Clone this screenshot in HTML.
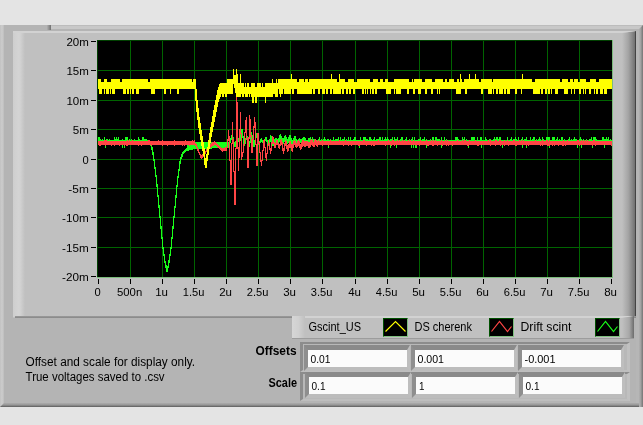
<!DOCTYPE html>
<html><head><meta charset="utf-8"><title>Scope</title>
<style>
html,body{margin:0;padding:0;}
body{width:643px;height:425px;background:#e4e4e4;position:relative;overflow:hidden;font-family:"Liberation Sans",sans-serif;font-size:12px;color:#000;}
.abs{position:absolute;}
#outer{left:0;top:25px;width:643px;height:382px;background:#b4b4b4;}
#outer .l{left:0;top:0;width:4px;height:382px;background:linear-gradient(90deg,#c0c0c0 0,#cacaca 30%,#c8c8c8 75%,#bababa 100%);}
#outer .r{right:0;top:0;width:4px;height:382px;background:linear-gradient(90deg,#b2b2b2 0,#a6a6a6 35%,#8c8c8c 70%,#747474 100%);clip-path:polygon(100% 0,100% 100%,0 100%,0 4px);z-index:2;}
#outer .b{clip-path:polygon(4px 0,100% 0,100% 100%,0 100%);left:0;bottom:0;width:643px;height:4px;background:linear-gradient(180deg,#acacac 0,#989898 45%,#808080 70%,#5a5a5a 100%);}
#strip{left:51px;top:0;width:592px;height:6px;background:linear-gradient(180deg,#bcbcbc 0,#bcbcbc 16.6%,#c8c8c8 16.7%,#c8c8c8 62%,#b4b4b4 70%,#b4b4b4 100%);}
#stripend{left:47px;top:0;width:4px;height:5px;background:linear-gradient(90deg,#b0b0b0,#707070);}
#panel{left:13px;top:31px;width:623px;height:287px;background:#c0c0c0;}
#panel .l{left:0;top:0;width:12px;height:286px;background:linear-gradient(90deg,#cecece 0,#d4d4d4 45%,#d2d2d2 60%,#c0c0c0 100%);}
#panel .r{right:0;top:0;clip-path:polygon(100% 0,100% 100%,0 100%,0 2px);width:14px;height:287px;background:linear-gradient(90deg,#c0c0c0 0,#a4a4a4 45%,#727272 92%,#444 93%,#444 100%);}
#panel .t{left:0;top:0;width:623px;height:2px;background:#d2d2d2;clip-path:polygon(0 0,100% 0,609px 100%,0 100%);}
#panel .b{left:2px;bottom:0;width:621px;height:2px;background:linear-gradient(180deg,#9c9c9c,#868686);}
#rightgap{left:636px;top:31px;width:3px;height:372px;background:#b6b6b6;}
#legend{left:292px;top:316px;width:342px;height:22px;background:#c0c0c0;box-shadow:0 1px 0 #9c9c9c;}
#legend .l{left:0;top:0;width:13px;height:22px;background:linear-gradient(90deg,#d6d6d6 0,#d0d0d0 50%,#c0c0c0 100%);}
#legend .t{left:0;top:0;width:342px;height:2px;background:#d2d2d2;clip-path:polygon(0 0,100% 0,330px 100%,0 100%);}
#legend .r{clip-path:polygon(100% 0,100% 100%,0 100%,0 2px);right:0;top:0;width:12px;height:22px;background:linear-gradient(90deg,#c0c0c0,#a8a8a8 60%,#6c6c6c 100%);}
.ico{width:23px;height:17px;background:#000;border:1px solid;border-color:#005000 #80c080 #80c080 #005000;top:318px;}
.arr{left:300px;width:330px;height:30px;background:#b8b8b8;border-style:solid;border-width:2px 3px 2px 3px;border-color:#8c8c8c #c0c0c0 #bebebe #8c8c8c;box-sizing:border-box;}
.cell{height:17px;width:99px;background:#fbfbfb;border-style:solid;border-width:5px 3px 4px 4px;border-color:#8a8a8a #bebebe #bcbcbc #8e8e8e;}
svg text{font-family:"Liberation Sans",sans-serif;font-size:12px;fill:#000;}
svg text.b{font-weight:bold;}
svg text.ax{font-size:11.6px;}
</style></head><body>
<div id="outer" class="abs"><div class="abs l"></div><div class="abs r"></div><div class="abs b"></div><div id="strip" class="abs"></div><div id="stripend" class="abs"></div></div>
<div id="rightgap" class="abs"></div>
<div id="panel" class="abs"><div class="abs l"></div><div class="abs r"></div><div class="abs t"></div><div class="abs b"></div></div>
<div id="legend" class="abs"><div class="abs t"></div><div class="abs l"></div><div class="abs r"></div></div>
<div class="abs ico" style="left:383px"></div><div class="abs ico" style="left:489px"></div><div class="abs ico" style="left:595px"></div>
<div class="abs arr" style="top:342px"></div>
<div class="abs arr" style="top:372px;height:29px"></div>
<div class="abs cell" style="left:304px;top:345px"></div><div class="abs cell" style="left:411px;top:345px"></div><div class="abs cell" style="left:518px;top:345px"></div>
<div class="abs cell" style="left:305px;top:372px"></div><div class="abs cell" style="left:412px;top:372px"></div><div class="abs cell" style="left:519px;top:372px"></div>
<svg class="abs" style="left:0;top:0;will-change:transform" width="643" height="425" viewBox="0 0 643 425">
<rect x="97" y="40" width="516" height="238" fill="#000"/>
<path d="M130.5 41V277M162.5 41V277M194.5 41V277M226.5 41V277M258.5 41V277M290.5 41V277M322.5 41V277M355.5 41V277M387.5 41V277M419.5 41V277M451.5 41V277M483.5 41V277M515.5 41V277M547.5 41V277M579.5 41V277M98 70.5H612M98 100.5H612M98 129.5H612M98 159.5H612M98 188.5H612M98 217.5H612M98 247.5H612" stroke="#006400" stroke-width="1" fill="none" shape-rendering="crispEdges"/>
<path d="M97.5 277V40.5H612" stroke="#004000" stroke-width="1" fill="none" shape-rendering="crispEdges"/>
<path d="M612.5 40V277.5H97" stroke="#7cbc7c" stroke-width="1" fill="none" shape-rendering="crispEdges"/>
<path d="M98.5 136.8V145.0M99.5 136.8V145.0M100.5 138.5V145.0M101.5 140.0V145.0M102.5 138.5V145.0M103.5 140.0V145.0M104.5 136.8V145.0M105.5 140.0V147.5M106.5 138.5V145.0M107.5 138.5V145.0M108.5 140.0V145.0M109.5 138.5V145.0M110.5 140.0V145.0M111.5 140.0V145.0M112.5 140.0V145.0M113.5 140.0V145.0M114.5 136.8V145.0M115.5 138.5V145.0M116.5 136.8V145.0M117.5 138.5V145.0M118.5 136.8V145.0M119.5 140.0V145.0M120.5 140.0V145.0M121.5 140.0V145.0M122.5 138.5V147.5M123.5 140.0V145.0M124.5 140.0V147.5M125.5 136.8V145.0M126.5 136.8V145.0M127.5 136.8V145.0M128.5 140.0V145.0M129.5 138.5V145.0M130.5 140.0V145.0M131.5 138.5V145.0M132.5 140.0V145.0M133.5 140.0V145.0M134.5 138.5V145.0M135.5 140.0V145.0M136.5 140.0V145.0M137.5 140.0V145.0M138.5 136.8V145.0M139.5 138.5V145.0M140.5 140.0V145.0M141.5 140.0V145.0M142.5 136.8V145.0M143.5 136.8V145.0M144.5 138.5V145.0M145.5 138.5V145.0M146.5 138.5V145.0M147.5 140.0V145.0M148.5 140.0V145.0M149.5 141.8V145.2M150.5 142.8V146.2M151.5 143.8V149.5M152.5 147.1V154.5M153.5 152.1V161.2M154.5 158.8V169.2M155.5 166.8V177.2M156.5 174.8V186.5M157.5 184.1V197.1M158.5 194.7V207.6M159.5 205.2V218.2M160.5 215.8V228.5M161.5 226.1V238.9M162.5 236.5V249.2M163.5 246.8V256.2M164.5 253.8V263.2M165.5 260.8V267.7M166.5 265.3V272.2M167.5 265.8V272.2M168.5 260.4V268.2M169.5 253.6V262.8M170.5 246.8V256.0M171.5 236.5V249.2M172.5 226.1V238.9M173.5 215.8V228.5M174.5 205.5V218.2M175.5 195.2V207.9M176.5 185.0V197.6M177.5 175.9V187.4M178.5 168.7V178.3M179.5 161.4V171.1M180.5 156.6V163.8M181.5 154.2V159.0M182.5 151.8V156.6M183.5 150.8V154.2M184.5 149.8V153.2M185.5 148.8V152.2M186.5 148.4V151.2M187.5 142.0V151.1M188.5 142.0V150.8M189.5 142.0V150.4M190.5 142.0V150.0M191.5 142.0V149.8M192.5 142.0V149.6M193.5 142.0V149.4M194.5 142.0V149.2M195.5 142.0V149.0M196.5 142.0V149.0M197.5 142.0V149.0M198.5 142.0V149.0M199.5 142.0V149.0M200.5 142.0V149.0M201.5 142.0V149.0M202.5 142.0V149.0M203.5 142.0V149.0M204.5 142.0V149.0M205.5 142.0V149.0M206.5 142.0V149.0M207.5 142.0V149.0M208.5 142.0V149.0M209.5 142.0V149.0M210.5 142.0V149.0M211.5 142.0V149.0M212.5 142.0V148.0M213.5 142.0V148.0M214.5 142.0V148.0M215.5 142.0V148.0M216.5 142.0V148.0M217.5 142.0V148.0M218.5 142.0V148.0M219.5 142.0V148.0M220.5 142.0V148.0M221.5 142.0V148.0M222.5 142.0V148.0M223.5 142.0V148.0M224.5 142.0V148.0M225.5 142.0V148.0M226.5 142.0V148.0M227.5 142.0V148.0M228.5 142.0V148.0M229.5 142.0V148.0M230.5 138.0V143.0M231.5 135.0V140.0M232.5 133.8V138.7M233.5 136.7V143.5M234.5 141.5V147.3M235.5 140.8V146.6M236.5 137.0V142.8M237.5 136.2V140.0M238.5 138.0V142.1M239.5 139.4V143.4M240.5 134.3V141.4M241.5 129.3V136.3M242.5 129.3V137.5M243.5 135.5V143.7M244.5 141.7V146.2M245.5 137.8V143.8M246.5 134.7V139.8M247.5 135.5V141.7M248.5 139.7V145.8M249.5 140.6V146.7M250.5 135.4V142.6M251.5 132.4V137.4M252.5 134.5V142.0M253.5 140.0V147.4M254.5 140.3V147.4M255.5 135.1V142.3M256.5 133.1V137.5M257.5 135.5V141.6M258.5 139.6V144.9M259.5 140.6V144.5M260.5 138.7V142.6M261.5 138.3V141.7M262.5 139.7V143.4M263.5 141.4V144.4M264.5 139.1V143.5M265.5 136.7V141.1M266.5 136.7V141.8M267.5 139.8V144.8M268.5 142.1V146.0M269.5 138.9V144.1M270.5 135.3V141.9M271.5 135.9V142.7M272.5 138.7V145.6M273.5 140.7V146.2M274.5 138.9V144.7M275.5 137.8V142.9M276.5 138.2V143.2M277.5 139.2V144.1M278.5 137.6V144.1M279.5 135.0V141.6M280.5 134.0V139.6M281.5 135.6V142.4M282.5 138.4V144.6M283.5 137.9V144.2M284.5 135.6V141.9M285.5 135.2V140.7M286.5 136.7V142.7M287.5 138.7V143.8M288.5 137.2V143.1M289.5 135.4V141.2M290.5 135.4V142.1M291.5 138.1V144.8M292.5 140.4V145.9M293.5 138.0V144.4M294.5 136.0V142.0M295.5 136.4V142.7M296.5 138.7V145.0M297.5 140.4V145.5M298.5 139.1V144.4M299.5 138.3V143.1M300.5 138.5V143.0M301.5 139.0V143.6M302.5 138.3V143.6M303.5 137.0V142.3M304.5 136.5V141.6M305.5 137.6V143.5M306.5 139.5V144.9M307.5 139.5V144.7M308.5 138.3V143.5M309.5 138.1V142.6M310.5 136.8V145.0M311.5 138.5V145.0M312.5 136.8V145.0M313.5 138.5V145.0M314.5 138.5V145.0M315.5 140.0V145.0M316.5 140.0V145.0M317.5 140.0V145.0M318.5 138.5V145.0M319.5 136.8V145.0M320.5 140.0V145.0M321.5 138.5V145.0M322.5 140.0V145.0M323.5 138.5V145.0M324.5 136.8V145.0M325.5 138.5V145.0M326.5 140.0V145.0M327.5 138.5V145.0M328.5 138.5V147.5M329.5 140.0V145.0M330.5 138.5V145.0M331.5 140.0V145.0M332.5 140.0V145.0M333.5 136.8V145.0M334.5 140.0V145.0M335.5 138.5V145.0M336.5 138.5V145.0M337.5 138.5V145.0M338.5 136.8V145.0M339.5 140.0V145.0M340.5 136.8V145.0M341.5 140.0V145.0M342.5 138.5V145.0M343.5 138.5V145.0M344.5 136.8V145.0M345.5 140.0V145.0M346.5 138.5V145.0M347.5 140.0V145.0M348.5 136.8V145.0M349.5 140.0V145.0M350.5 136.8V145.0M351.5 140.0V145.0M352.5 140.0V145.0M353.5 138.5V145.0M354.5 136.8V145.0M355.5 136.8V145.0M356.5 140.0V145.0M357.5 140.0V145.0M358.5 140.0V145.0M359.5 140.0V147.5M360.5 136.8V145.0M361.5 140.0V145.0M362.5 140.0V145.0M363.5 136.8V145.0M364.5 136.8V145.0M365.5 136.8V145.0M366.5 138.5V145.0M367.5 138.5V145.0M368.5 140.0V145.0M369.5 136.8V145.0M370.5 136.8V145.0M371.5 138.5V145.0M372.5 140.0V145.0M373.5 138.5V145.0M374.5 136.8V145.0M375.5 140.0V145.0M376.5 138.5V145.0M377.5 138.5V145.0M378.5 138.5V145.0M379.5 136.8V145.0M380.5 136.8V145.0M381.5 140.0V145.0M382.5 136.8V145.0M383.5 140.0V145.0M384.5 138.5V145.0M385.5 136.8V145.0M386.5 138.5V145.0M387.5 136.8V145.0M388.5 138.5V145.0M389.5 140.0V145.0M390.5 138.5V147.5M391.5 138.5V145.0M392.5 136.8V145.0M393.5 140.0V145.0M394.5 136.8V145.0M395.5 138.5V145.0M396.5 138.5V147.5M397.5 136.8V145.0M398.5 140.0V145.0M399.5 140.0V145.0M400.5 138.5V145.0M401.5 136.8V145.0M402.5 136.8V145.0M403.5 140.0V145.0M404.5 140.0V145.0M405.5 138.5V145.0M406.5 136.8V145.0M407.5 140.0V145.0M408.5 140.0V145.0M409.5 138.5V145.0M410.5 140.0V145.0M411.5 138.5V147.5M412.5 136.8V145.0M413.5 140.0V147.5M414.5 136.8V145.0M415.5 140.0V147.5M416.5 140.0V147.5M417.5 140.0V145.0M418.5 138.5V145.0M419.5 138.5V145.0M420.5 136.8V145.0M421.5 140.0V145.0M422.5 138.5V145.0M423.5 138.5V145.0M424.5 136.8V145.0M425.5 140.0V145.0M426.5 138.5V147.5M427.5 140.0V145.0M428.5 140.0V145.0M429.5 140.0V145.0M430.5 138.5V145.0M431.5 140.0V145.0M432.5 136.8V145.0M433.5 136.8V145.0M434.5 140.0V145.0M435.5 136.8V145.0M436.5 136.8V145.0M437.5 138.5V145.0M438.5 138.5V145.0M439.5 138.5V145.0M440.5 140.0V145.0M441.5 136.8V147.5M442.5 140.0V145.0M443.5 140.0V145.0M444.5 136.8V145.0M445.5 140.0V145.0M446.5 138.5V145.0M447.5 140.0V145.0M448.5 140.0V145.0M449.5 140.0V145.0M450.5 140.0V145.0M451.5 140.0V145.0M452.5 140.0V145.0M453.5 140.0V145.0M454.5 140.0V145.0M455.5 136.8V145.0M456.5 136.8V145.0M457.5 136.8V145.0M458.5 138.5V145.0M459.5 140.0V145.0M460.5 140.0V145.0M461.5 140.0V145.0M462.5 136.8V145.0M463.5 138.5V145.0M464.5 136.8V145.0M465.5 140.0V145.0M466.5 138.5V145.0M467.5 140.0V145.0M468.5 140.0V147.5M469.5 140.0V145.0M470.5 140.0V145.0M471.5 136.8V145.0M472.5 136.8V145.0M473.5 136.8V145.0M474.5 136.8V145.0M475.5 140.0V145.0M476.5 140.0V145.0M477.5 136.8V145.0M478.5 140.0V145.0M479.5 140.0V145.0M480.5 136.8V145.0M481.5 136.8V147.5M482.5 140.0V145.0M483.5 140.0V145.0M484.5 140.0V145.0M485.5 136.8V145.0M486.5 138.5V145.0M487.5 140.0V145.0M488.5 140.0V145.0M489.5 138.5V145.0M490.5 138.5V145.0M491.5 140.0V145.0M492.5 140.0V145.0M493.5 138.5V145.0M494.5 136.8V145.0M495.5 138.5V145.0M496.5 136.8V145.0M497.5 136.8V145.0M498.5 138.5V145.0M499.5 136.8V145.0M500.5 136.8V145.0M501.5 140.0V145.0M502.5 140.0V147.5M503.5 140.0V145.0M504.5 140.0V145.0M505.5 140.0V145.0M506.5 140.0V145.0M507.5 136.8V145.0M508.5 140.0V145.0M509.5 140.0V145.0M510.5 138.5V145.0M511.5 136.8V145.0M512.5 140.0V145.0M513.5 138.5V145.0M514.5 138.5V145.0M515.5 136.8V145.0M516.5 138.5V145.0M517.5 140.0V145.0M518.5 136.8V145.0M519.5 140.0V145.0M520.5 140.0V145.0M521.5 138.5V145.0M522.5 136.8V147.5M523.5 140.0V145.0M524.5 138.5V145.0M525.5 138.5V145.0M526.5 136.8V147.5M527.5 140.0V145.0M528.5 140.0V145.0M529.5 140.0V145.0M530.5 136.8V145.0M531.5 140.0V145.0M532.5 138.5V145.0M533.5 136.8V145.0M534.5 136.8V145.0M535.5 140.0V145.0M536.5 138.5V145.0M537.5 140.0V145.0M538.5 138.5V145.0M539.5 136.8V145.0M540.5 138.5V145.0M541.5 140.0V145.0M542.5 136.8V145.0M543.5 138.5V145.0M544.5 140.0V145.0M545.5 140.0V145.0M546.5 136.8V145.0M547.5 136.8V145.0M548.5 136.8V145.0M549.5 136.8V147.5M550.5 140.0V145.0M551.5 140.0V145.0M552.5 136.8V145.0M553.5 136.8V145.0M554.5 136.8V145.0M555.5 140.0V145.0M556.5 138.5V145.0M557.5 136.8V145.0M558.5 140.0V145.0M559.5 138.5V145.0M560.5 140.0V145.0M561.5 136.8V145.0M562.5 136.8V145.0M563.5 140.0V145.0M564.5 138.5V145.0M565.5 140.0V145.0M566.5 140.0V145.0M567.5 140.0V145.0M568.5 138.5V145.0M569.5 136.8V145.0M570.5 140.0V145.0M571.5 138.5V145.0M572.5 140.0V145.0M573.5 138.5V145.0M574.5 136.8V145.0M575.5 138.5V145.0M576.5 138.5V145.0M577.5 140.0V147.5M578.5 140.0V145.0M579.5 138.5V145.0M580.5 136.8V145.0M581.5 138.5V147.5M582.5 140.0V145.0M583.5 138.5V145.0M584.5 140.0V145.0M585.5 140.0V145.0M586.5 138.5V145.0M587.5 140.0V145.0M588.5 140.0V145.0M589.5 138.5V145.0M590.5 138.5V145.0M591.5 136.8V145.0M592.5 140.0V147.5M593.5 136.8V145.0M594.5 136.8V145.0M595.5 136.8V145.0M596.5 138.5V145.0M597.5 140.0V145.0M598.5 140.0V145.0M599.5 140.0V145.0M600.5 140.0V145.0M601.5 140.0V145.0M602.5 136.8V145.0M603.5 136.8V145.0M604.5 138.5V147.5M605.5 138.5V145.0M606.5 136.8V145.0M607.5 138.5V145.0M608.5 136.8V145.0M609.5 140.0V145.0M610.5 138.5V145.0M611.5 140.0V145.0" stroke="#1aff1a" stroke-width="1" fill="none" shape-rendering="crispEdges"/>
<path d="M98.5 140.5V145.0M99.5 140.5V146.0M100.5 140.5V146.0M101.5 140.5V145.0M102.5 140.5V145.0M103.5 140.5V145.0M104.5 139.5V145.0M105.5 139.5V146.0M106.5 139.5V145.0M107.5 140.5V145.0M108.5 140.5V145.0M109.5 140.5V145.0M110.5 140.5V145.0M111.5 140.5V146.0M112.5 140.5V145.0M113.5 140.5V145.0M114.5 140.5V146.0M115.5 140.5V145.0M116.5 140.5V145.0M117.5 140.5V145.0M118.5 140.5V145.0M119.5 140.5V146.0M120.5 140.5V145.0M121.5 140.5V145.0M122.5 140.5V145.0M123.5 140.5V145.0M124.5 140.5V146.0M125.5 140.5V145.0M126.5 140.5V146.0M127.5 139.5V146.0M128.5 140.5V145.0M129.5 139.5V145.0M130.5 140.5V145.0M131.5 140.5V145.0M132.5 139.5V145.0M133.5 140.5V145.0M134.5 140.5V145.0M135.5 140.5V145.0M136.5 140.5V145.0M137.5 140.5V145.0M138.5 140.5V146.0M139.5 140.5V145.0M140.5 140.5V145.0M141.5 140.5V146.0M142.5 140.5V145.0M143.5 140.5V145.0M144.5 140.5V145.0M145.5 140.5V145.0M146.5 140.5V145.0M147.5 140.5V145.0M148.5 139.5V145.0M149.5 139.5V145.0M150.5 140.5V145.0M151.5 140.5V146.0M152.5 140.5V145.0M153.5 140.5V145.0M154.5 140.5V145.0M155.5 140.5V145.0M156.5 140.5V145.0M157.5 140.5V145.0M158.5 139.5V145.0M159.5 140.5V145.0M160.5 140.5V145.0M161.5 140.5V145.0M162.5 139.5V146.0M163.5 140.5V145.0M164.5 140.5V145.0M165.5 140.5V145.0M166.5 140.5V145.0M167.5 140.5V146.0M168.5 140.5V145.0M169.5 140.5V145.0M170.5 140.5V145.0M171.5 140.5V145.0M172.5 140.5V145.0M173.5 140.5V145.0M174.5 139.5V146.0M175.5 140.5V145.0M176.5 140.5V145.0M177.5 140.5V145.0M178.5 140.5V145.0M179.5 140.5V145.0M180.5 140.5V145.0M181.5 140.5V145.0M182.5 140.5V146.0M183.5 140.5V145.0M184.5 140.5V146.0M185.5 139.5V145.0M186.5 140.5V145.0M187.5 140.5V145.0M188.5 140.5V145.0M189.5 140.5V146.0M190.5 140.5V145.0M191.5 140.5V145.0M192.5 139.5V145.0M193.5 140.5V145.0M194.5 139.5V145.0M195.5 142.7V146.3M196.5 144.4V148.1M197.5 146.9V150.6M198.5 149.4V153.0M199.5 151.7V155.3M200.5 154.0V157.6M201.5 154.9V158.5M202.5 154.2V157.8M203.5 153.5V157.1M204.5 152.3V155.9M205.5 150.6V154.2M206.5 148.8V152.4M207.5 147.1V150.7M208.5 145.8V149.4M209.5 144.9V148.5M210.5 144.0V147.6M211.5 143.1V146.7M212.5 142.4V146.1M213.5 141.9V145.6M214.5 141.4V145.1M215.5 141.7V145.3M216.5 142.7V146.3M217.5 143.7V147.3M218.5 144.7V148.3M219.5 145.7V149.3M220.5 146.7V150.3M221.5 147.7V151.3M222.5 148.1V151.7M223.5 147.8V151.4M224.5 147.6V151.2M225.5 147.3V150.9M226.5 147.2V150.8M227.5 139.4V147.6M228.5 130.4V140.6M229.5 136.3V161.0M230.5 159.8V184.6M231.5 142.7V184.6M232.5 122.4V143.9M233.5 138.6V172.2M234.5 171.0V204.6M235.5 147.6V204.6M236.5 97.4V148.8M237.5 101.9V148.5M238.5 147.3V171.2M239.5 128.9V157.5M240.5 112.4V134.0M241.5 132.8V159.6M242.5 151.7V157.3M243.5 143.6V152.8M244.5 131.9V144.8M245.5 120.3V133.1M246.5 117.4V139.6M247.5 138.4V167.6M248.5 137.3V167.6M249.5 115.4V138.5M250.5 119.4V136.6M251.5 135.4V152.6M252.5 138.9V152.6M253.5 126.3V140.1M254.5 116.9V127.5M255.5 122.2V144.8M256.5 143.6V166.2M257.5 133.4V166.2M258.5 133.4V143.6M259.5 142.4V152.7M260.5 151.5V161.7M261.5 160.1V166.2M262.5 150.2V161.3M263.5 140.3V151.4M264.5 138.7V148.2M265.5 146.7V157.7M266.5 152.8V160.6M267.5 143.7V154.4M268.5 139.6V145.4M269.5 142.7V150.2M270.5 148.3V153.6M271.5 141.5V150.8M272.5 136.1V143.6M273.5 137.2V144.0M274.5 141.8V148.2M275.5 142.8V148.0M276.5 139.9V145.2M277.5 139.7V145.2M278.5 142.6V148.3M279.5 143.5V149.0M280.5 139.9V146.2M281.5 138.7V145.2M282.5 142.2V150.7M283.5 147.6V153.5M284.5 142.8V151.0M285.5 139.5V146.1M286.5 141.0V148.7M287.5 145.2V152.1M288.5 144.1V151.4M289.5 140.5V147.7M290.5 140.6V147.7M291.5 143.9V151.1M292.5 144.3V151.5M293.5 140.7V148.3M294.5 139.7V145.3M295.5 141.2V147.3M296.5 142.8V148.2M297.5 140.9V147.1M298.5 139.8V145.5M299.5 141.0V148.1M300.5 143.6V150.0M301.5 142.1V149.2M302.5 140.0V146.7M303.5 140.1V145.7M304.5 141.1V146.7M305.5 141.3V146.7M306.5 140.6V145.9M307.5 140.5V146.2M308.5 141.6V147.6M309.5 142.0V148.0M310.5 140.1V146.6M311.5 139.2V144.7M312.5 140.1V146.2M313.5 141.6V147.2M314.5 140.4V146.6M315.5 139.2V145.0M316.5 139.6V145.9M317.5 141.3V147.4M318.5 139.5V145.0M319.5 140.5V145.0M320.5 140.5V145.0M321.5 140.5V145.0M322.5 139.5V146.0M323.5 140.5V145.0M324.5 140.5V145.0M325.5 140.5V145.0M326.5 140.5V145.0M327.5 140.5V145.0M328.5 140.5V146.0M329.5 140.5V145.0M330.5 139.5V145.0M331.5 140.5V145.0M332.5 140.5V145.0M333.5 140.5V145.0M334.5 140.5V145.0M335.5 140.5V145.0M336.5 140.5V145.0M337.5 140.5V145.0M338.5 140.5V145.0M339.5 139.5V145.0M340.5 140.5V145.0M341.5 140.5V145.0M342.5 140.5V145.0M343.5 140.5V146.0M344.5 140.5V145.0M345.5 139.5V145.0M346.5 140.5V145.0M347.5 140.5V145.0M348.5 140.5V146.0M349.5 140.5V145.0M350.5 140.5V145.0M351.5 140.5V146.0M352.5 140.5V145.0M353.5 140.5V145.0M354.5 140.5V145.0M355.5 140.5V145.0M356.5 140.5V145.0M357.5 140.5V145.0M358.5 140.5V146.0M359.5 140.5V146.0M360.5 140.5V145.0M361.5 140.5V145.0M362.5 140.5V145.0M363.5 139.5V145.0M364.5 139.5V145.0M365.5 140.5V145.0M366.5 140.5V146.0M367.5 140.5V145.0M368.5 140.5V145.0M369.5 140.5V145.0M370.5 140.5V145.0M371.5 140.5V146.0M372.5 140.5V145.0M373.5 140.5V146.0M374.5 140.5V146.0M375.5 140.5V145.0M376.5 140.5V145.0M377.5 140.5V145.0M378.5 139.5V145.0M379.5 140.5V145.0M380.5 140.5V145.0M381.5 140.5V145.0M382.5 140.5V145.0M383.5 140.5V145.0M384.5 140.5V145.0M385.5 140.5V146.0M386.5 140.5V145.0M387.5 140.5V145.0M388.5 139.5V145.0M389.5 140.5V145.0M390.5 140.5V145.0M391.5 140.5V146.0M392.5 139.5V145.0M393.5 139.5V145.0M394.5 140.5V146.0M395.5 140.5V145.0M396.5 140.5V145.0M397.5 139.5V145.0M398.5 140.5V145.0M399.5 139.5V145.0M400.5 140.5V145.0M401.5 140.5V145.0M402.5 139.5V145.0M403.5 140.5V145.0M404.5 139.5V145.0M405.5 140.5V145.0M406.5 140.5V145.0M407.5 140.5V145.0M408.5 139.5V145.0M409.5 140.5V145.0M410.5 139.5V145.0M411.5 140.5V145.0M412.5 140.5V145.0M413.5 139.5V145.0M414.5 140.5V145.0M415.5 140.5V145.0M416.5 140.5V146.0M417.5 140.5V145.0M418.5 140.5V145.0M419.5 140.5V146.0M420.5 139.5V145.0M421.5 140.5V145.0M422.5 140.5V145.0M423.5 140.5V145.0M424.5 140.5V145.0M425.5 140.5V145.0M426.5 139.5V145.0M427.5 140.5V146.0M428.5 140.5V146.0M429.5 140.5V145.0M430.5 140.5V145.0M431.5 139.5V145.0M432.5 140.5V146.0M433.5 139.5V146.0M434.5 140.5V145.0M435.5 139.5V145.0M436.5 140.5V145.0M437.5 140.5V146.0M438.5 140.5V145.0M439.5 140.5V145.0M440.5 140.5V145.0M441.5 139.5V145.0M442.5 140.5V146.0M443.5 140.5V145.0M444.5 140.5V145.0M445.5 139.5V145.0M446.5 140.5V146.0M447.5 139.5V145.0M448.5 140.5V146.0M449.5 140.5V145.0M450.5 140.5V145.0M451.5 140.5V145.0M452.5 140.5V146.0M453.5 140.5V145.0M454.5 140.5V145.0M455.5 140.5V145.0M456.5 140.5V145.0M457.5 139.5V145.0M458.5 140.5V145.0M459.5 140.5V145.0M460.5 140.5V145.0M461.5 140.5V145.0M462.5 139.5V145.0M463.5 140.5V145.0M464.5 139.5V145.0M465.5 139.5V145.0M466.5 140.5V145.0M467.5 140.5V146.0M468.5 140.5V146.0M469.5 139.5V145.0M470.5 140.5V145.0M471.5 140.5V145.0M472.5 140.5V145.0M473.5 140.5V145.0M474.5 140.5V145.0M475.5 139.5V145.0M476.5 140.5V145.0M477.5 140.5V146.0M478.5 140.5V146.0M479.5 140.5V145.0M480.5 140.5V145.0M481.5 140.5V145.0M482.5 140.5V145.0M483.5 140.5V145.0M484.5 140.5V145.0M485.5 140.5V145.0M486.5 140.5V145.0M487.5 140.5V145.0M488.5 139.5V145.0M489.5 140.5V145.0M490.5 139.5V146.0M491.5 140.5V145.0M492.5 140.5V145.0M493.5 140.5V145.0M494.5 140.5V145.0M495.5 139.5V146.0M496.5 139.5V145.0M497.5 140.5V145.0M498.5 140.5V145.0M499.5 139.5V145.0M500.5 139.5V146.0M501.5 140.5V145.0M502.5 140.5V145.0M503.5 140.5V145.0M504.5 139.5V146.0M505.5 140.5V145.0M506.5 140.5V145.0M507.5 139.5V145.0M508.5 140.5V146.0M509.5 140.5V145.0M510.5 140.5V145.0M511.5 140.5V145.0M512.5 140.5V145.0M513.5 139.5V145.0M514.5 139.5V145.0M515.5 140.5V146.0M516.5 140.5V146.0M517.5 140.5V145.0M518.5 140.5V145.0M519.5 139.5V145.0M520.5 140.5V145.0M521.5 139.5V145.0M522.5 140.5V145.0M523.5 139.5V145.0M524.5 140.5V145.0M525.5 140.5V145.0M526.5 140.5V146.0M527.5 140.5V145.0M528.5 140.5V146.0M529.5 140.5V145.0M530.5 140.5V145.0M531.5 140.5V145.0M532.5 140.5V145.0M533.5 140.5V145.0M534.5 140.5V145.0M535.5 139.5V145.0M536.5 140.5V145.0M537.5 140.5V145.0M538.5 140.5V145.0M539.5 140.5V145.0M540.5 140.5V146.0M541.5 140.5V145.0M542.5 139.5V146.0M543.5 140.5V145.0M544.5 140.5V145.0M545.5 140.5V145.0M546.5 139.5V145.0M547.5 139.5V146.0M548.5 140.5V146.0M549.5 139.5V146.0M550.5 140.5V145.0M551.5 140.5V145.0M552.5 140.5V146.0M553.5 140.5V145.0M554.5 140.5V146.0M555.5 140.5V145.0M556.5 140.5V145.0M557.5 140.5V145.0M558.5 140.5V146.0M559.5 140.5V145.0M560.5 140.5V145.0M561.5 140.5V145.0M562.5 140.5V146.0M563.5 139.5V146.0M564.5 140.5V145.0M565.5 140.5V146.0M566.5 140.5V145.0M567.5 139.5V145.0M568.5 140.5V145.0M569.5 140.5V145.0M570.5 140.5V145.0M571.5 140.5V145.0M572.5 140.5V145.0M573.5 140.5V145.0M574.5 140.5V145.0M575.5 140.5V145.0M576.5 140.5V145.0M577.5 139.5V145.0M578.5 139.5V145.0M579.5 140.5V146.0M580.5 140.5V145.0M581.5 139.5V145.0M582.5 140.5V145.0M583.5 139.5V145.0M584.5 140.5V145.0M585.5 139.5V145.0M586.5 140.5V145.0M587.5 139.5V145.0M588.5 140.5V145.0M589.5 140.5V145.0M590.5 140.5V145.0M591.5 140.5V145.0M592.5 140.5V146.0M593.5 139.5V145.0M594.5 139.5V145.0M595.5 140.5V146.0M596.5 140.5V145.0M597.5 140.5V145.0M598.5 140.5V145.0M599.5 140.5V145.0M600.5 140.5V145.0M601.5 140.5V145.0M602.5 140.5V145.0M603.5 140.5V145.0M604.5 140.5V145.0M605.5 140.5V145.0M606.5 140.5V145.0M607.5 140.5V145.0M608.5 140.5V145.0M609.5 140.5V145.0M610.5 140.5V145.0M611.5 140.5V146.0" stroke="#ff4545" stroke-width="1" fill="none" shape-rendering="crispEdges"/>
<path d="M98.5 78.8V89.3M99.5 78.8V93.8M100.5 78.8V93.8M101.5 82.0V93.8M102.5 82.0V89.3M103.5 82.0V89.3M104.5 78.8V93.8M105.5 78.8V89.3M106.5 78.8V93.8M107.5 82.0V93.8M108.5 82.0V93.8M109.5 82.0V89.3M110.5 82.0V93.8M111.5 78.8V89.3M112.5 78.8V93.8M113.5 78.8V93.8M114.5 78.8V93.8M115.5 78.8V89.3M116.5 78.8V89.3M117.5 78.8V89.3M118.5 78.8V89.3M119.5 78.8V89.3M120.5 82.0V89.3M121.5 82.0V89.3M122.5 78.8V89.3M123.5 78.8V93.8M124.5 78.8V93.8M125.5 78.8V93.8M126.5 78.8V89.3M127.5 78.8V93.8M128.5 78.8V93.8M129.5 78.8V89.3M130.5 78.8V93.8M131.5 78.8V89.3M132.5 78.8V93.8M133.5 78.8V93.8M134.5 78.8V89.3M135.5 78.8V89.3M136.5 78.8V93.8M137.5 78.8V93.8M138.5 78.8V93.8M139.5 78.8V89.3M140.5 78.8V89.3M141.5 78.8V89.3M142.5 78.8V89.3M143.5 78.8V89.3M144.5 78.8V89.3M145.5 78.8V89.3M146.5 78.8V89.3M147.5 78.8V89.3M148.5 82.0V89.3M149.5 82.0V89.3M150.5 78.8V89.3M151.5 78.8V93.8M152.5 78.8V93.8M153.5 78.8V93.8M154.5 78.8V93.8M155.5 78.8V89.3M156.5 78.8V89.3M157.5 78.8V89.3M158.5 78.8V89.3M159.5 78.8V89.3M160.5 78.8V89.3M161.5 78.8V89.3M162.5 78.8V89.3M163.5 78.8V89.3M164.5 78.8V93.8M165.5 78.8V93.8M166.5 78.8V89.3M167.5 78.8V89.3M168.5 78.8V89.3M169.5 78.8V89.3M170.5 78.8V93.8M171.5 78.8V89.3M172.5 78.8V89.3M173.5 78.8V89.3M174.5 78.8V89.3M175.5 78.8V89.3M176.5 78.8V89.3M177.5 78.8V93.8M178.5 78.8V93.8M179.5 78.8V89.3M180.5 78.8V89.3M181.5 78.8V89.3M182.5 78.8V89.3M183.5 78.8V89.3M184.5 78.8V89.3M185.5 78.8V89.3M186.5 78.8V89.3M187.5 78.8V89.3M188.5 78.8V89.3M189.5 78.8V89.3M190.5 78.8V89.3M191.5 78.8V89.3M192.5 82.0V89.3M193.5 78.8V89.3M194.5 78.8V89.3M195.5 79.0V101.4M196.5 89.4V112.0M197.5 100.1V119.9M198.5 108.4V127.6M199.5 116.7V133.7M200.5 123.4V139.8M201.5 130.1V145.6M202.5 136.3V150.9M203.5 142.2V156.2M204.5 148.1V165.3M205.5 157.7V167.5M206.5 153.6V167.5M207.5 146.6V161.1M208.5 140.0V154.7M209.5 133.4V148.7M210.5 127.4V142.6M211.5 121.6V137.2M212.5 115.8V131.9M213.5 110.4V126.7M214.5 105.1V121.9M215.5 100.0V117.0M216.5 95.0V112.0M217.5 90.0V107.0M218.5 87.0V102.0M219.5 84.0V99.0M220.5 83.0V97.0M221.5 83.0V93.5M222.5 83.0V97.0M223.5 83.0V97.0M224.5 83.0V93.5M225.5 83.0V97.0M226.5 83.0V97.0M227.5 79.0V93.5M228.5 79.0V93.5M229.5 79.0V93.5M230.5 79.0V93.5M231.5 79.0V93.5M232.5 79.0V93.5M233.5 69.0V84.0M234.5 75.0V88.0M235.5 75.0V93.0M236.5 69.0V97.0M237.5 74.0V97.0M238.5 83.0V97.0M239.5 83.0V97.0M240.5 74.0V97.0M241.5 83.0V93.5M242.5 83.0V97.0M243.5 83.0V97.0M244.5 87.0V93.5M245.5 83.0V97.0M246.5 87.0V97.0M247.5 83.0V97.0M248.5 83.0V93.5M249.5 87.0V97.0M250.5 87.0V93.5M251.5 83.0V97.0M252.5 83.0V102.8M253.5 83.0V102.8M254.5 83.0V97.0M255.5 87.0V102.8M256.5 87.0V102.8M257.5 83.0V97.0M258.5 83.0V97.0M259.5 83.0V97.0M260.5 83.0V97.0M261.5 87.0V97.0M262.5 83.0V97.0M263.5 87.0V97.0M264.5 87.0V97.0M265.5 83.0V102.8M266.5 83.0V97.0M267.5 83.0V97.0M268.5 83.0V97.0M269.5 83.0V97.0M270.5 83.0V97.0M271.5 83.0V97.0M272.5 79.0V97.0M273.5 83.0V93.5M274.5 83.0V93.5M275.5 83.0V97.0M276.5 79.0V97.0M277.5 83.0V97.0M278.5 78.8V89.3M279.5 78.8V93.8M280.5 78.8V97.0M281.5 78.8V93.8M282.5 78.8V93.8M283.5 78.8V89.3M284.5 78.8V93.8M285.5 78.8V93.8M286.5 78.8V93.8M287.5 78.8V93.8M288.5 78.8V93.8M289.5 78.8V93.8M290.5 78.8V93.8M291.5 74.0V89.3M292.5 78.8V93.8M293.5 78.8V93.8M294.5 78.8V89.3M295.5 78.8V89.3M296.5 78.8V89.3M297.5 82.0V93.8M298.5 82.0V93.8M299.5 78.8V93.8M300.5 78.8V93.8M301.5 78.8V93.8M302.5 78.8V93.8M303.5 78.8V93.8M304.5 82.0V93.8M305.5 78.8V93.8M306.5 78.8V93.8M307.5 78.8V93.8M308.5 82.0V93.8M309.5 78.8V93.8M310.5 78.8V93.8M311.5 78.8V93.8M312.5 78.8V89.3M313.5 78.8V93.8M314.5 78.8V93.8M315.5 78.8V89.3M316.5 78.8V89.3M317.5 78.8V89.3M318.5 78.8V93.8M319.5 78.8V93.8M320.5 78.8V89.3M321.5 78.8V89.3M322.5 78.8V93.8M323.5 78.8V93.8M324.5 78.8V93.8M325.5 78.8V89.3M326.5 78.8V93.8M327.5 78.8V93.8M328.5 78.8V89.3M329.5 78.8V89.3M330.5 78.8V93.8M331.5 74.0V93.8M332.5 78.8V89.3M333.5 78.8V93.8M334.5 78.8V93.8M335.5 78.8V93.8M336.5 78.8V93.8M337.5 82.0V93.8M338.5 82.0V93.8M339.5 74.0V93.8M340.5 78.8V93.8M341.5 78.8V89.3M342.5 78.8V93.8M343.5 78.8V93.8M344.5 78.8V89.3M345.5 82.0V89.3M346.5 82.0V93.8M347.5 82.0V93.8M348.5 78.8V89.3M349.5 78.8V93.8M350.5 78.8V93.8M351.5 78.8V89.3M352.5 78.8V89.3M353.5 78.8V93.8M354.5 82.0V93.8M355.5 82.0V89.3M356.5 82.0V89.3M357.5 78.8V89.3M358.5 78.8V89.3M359.5 78.8V89.3M360.5 78.8V89.3M361.5 78.8V89.3M362.5 78.8V93.8M363.5 78.8V93.8M364.5 78.8V89.3M365.5 78.8V93.8M366.5 78.8V89.3M367.5 78.8V93.8M368.5 78.8V89.3M369.5 78.8V89.3M370.5 82.0V93.8M371.5 82.0V89.3M372.5 82.0V93.8M373.5 78.8V93.8M374.5 78.8V89.3M375.5 78.8V93.8M376.5 78.8V93.8M377.5 78.8V89.3M378.5 82.0V89.3M379.5 82.0V89.3M380.5 78.8V89.3M381.5 78.8V89.3M382.5 78.8V89.3M383.5 82.0V89.3M384.5 82.0V89.3M385.5 78.8V89.3M386.5 78.8V93.8M387.5 78.8V93.8M388.5 82.0V93.8M389.5 82.0V93.8M390.5 82.0V93.8M391.5 82.0V89.3M392.5 82.0V89.3M393.5 82.0V89.3M394.5 78.8V93.8M395.5 78.8V89.3M396.5 78.8V93.8M397.5 78.8V93.8M398.5 78.8V93.8M399.5 78.8V93.8M400.5 78.8V93.8M401.5 78.8V89.3M402.5 78.8V89.3M403.5 78.8V89.3M404.5 78.8V89.3M405.5 78.8V89.3M406.5 78.8V89.3M407.5 78.8V93.8M408.5 78.8V93.8M409.5 82.0V89.3M410.5 82.0V89.3M411.5 82.0V89.3M412.5 78.8V89.3M413.5 82.0V93.8M414.5 78.8V93.8M415.5 78.8V89.3M416.5 78.8V89.3M417.5 78.8V89.3M418.5 78.8V93.8M419.5 78.8V93.8M420.5 78.8V93.8M421.5 78.8V89.3M422.5 82.0V89.3M423.5 82.0V89.3M424.5 82.0V89.3M425.5 78.8V93.8M426.5 78.8V93.8M427.5 78.8V89.3M428.5 78.8V89.3M429.5 78.8V89.3M430.5 78.8V89.3M431.5 78.8V93.8M432.5 82.0V93.8M433.5 82.0V89.3M434.5 82.0V89.3M435.5 78.8V89.3M436.5 78.8V89.3M437.5 78.8V93.8M438.5 78.8V89.3M439.5 78.8V93.8M440.5 78.8V89.3M441.5 78.8V89.3M442.5 78.8V89.3M443.5 82.0V89.3M444.5 82.0V89.3M445.5 78.8V89.3M446.5 78.8V89.3M447.5 82.0V89.3M448.5 82.0V89.3M449.5 78.8V89.3M450.5 78.8V89.3M451.5 78.8V89.3M452.5 78.8V89.3M453.5 78.8V89.3M454.5 82.0V89.3M455.5 82.0V89.3M456.5 82.0V93.8M457.5 78.8V93.8M458.5 78.8V93.8M459.5 82.0V93.8M460.5 74.0V93.8M461.5 78.8V89.3M462.5 82.0V89.3M463.5 82.0V89.3M464.5 78.8V89.3M465.5 78.8V93.8M466.5 78.8V93.8M467.5 78.8V89.3M468.5 78.8V89.3M469.5 74.0V89.3M470.5 78.8V89.3M471.5 78.8V89.3M472.5 78.8V89.3M473.5 78.8V89.3M474.5 78.8V89.3M475.5 74.0V89.3M476.5 78.8V89.3M477.5 78.8V89.3M478.5 78.8V89.3M479.5 82.0V89.3M480.5 82.0V89.3M481.5 78.8V93.8M482.5 78.8V93.8M483.5 78.8V89.3M484.5 78.8V89.3M485.5 78.8V89.3M486.5 78.8V89.3M487.5 78.8V89.3M488.5 78.8V93.8M489.5 78.8V93.8M490.5 78.8V93.8M491.5 78.8V93.8M492.5 82.0V89.3M493.5 78.8V93.8M494.5 78.8V89.3M495.5 78.8V89.3M496.5 78.8V93.8M497.5 78.8V93.8M498.5 78.8V89.3M499.5 78.8V93.8M500.5 78.8V93.8M501.5 78.8V93.8M502.5 78.8V93.8M503.5 78.8V89.3M504.5 78.8V93.8M505.5 78.8V93.8M506.5 78.8V89.3M507.5 78.8V93.8M508.5 78.8V93.8M509.5 78.8V93.8M510.5 78.8V89.3M511.5 78.8V89.3M512.5 78.8V89.3M513.5 78.8V89.3M514.5 78.8V89.3M515.5 78.8V93.8M516.5 78.8V93.8M517.5 78.8V89.3M518.5 78.8V89.3M519.5 78.8V89.3M520.5 78.8V89.3M521.5 78.8V93.8M522.5 74.0V89.3M523.5 78.8V89.3M524.5 78.8V89.3M525.5 78.8V89.3M526.5 78.8V89.3M527.5 78.8V89.3M528.5 78.8V89.3M529.5 78.8V89.3M530.5 78.8V89.3M531.5 78.8V89.3M532.5 82.0V89.3M533.5 82.0V93.8M534.5 82.0V93.8M535.5 78.8V93.8M536.5 78.8V93.8M537.5 78.8V93.8M538.5 78.8V93.8M539.5 78.8V93.8M540.5 78.8V89.3M541.5 78.8V93.8M542.5 78.8V93.8M543.5 78.8V89.3M544.5 78.8V89.3M545.5 78.8V93.8M546.5 78.8V93.8M547.5 78.8V89.3M548.5 78.8V93.8M549.5 78.8V93.8M550.5 78.8V89.3M551.5 78.8V93.8M552.5 78.8V89.3M553.5 78.8V89.3M554.5 78.8V89.3M555.5 78.8V93.8M556.5 78.8V93.8M557.5 78.8V93.8M558.5 78.8V89.3M559.5 78.8V89.3M560.5 82.0V89.3M561.5 82.0V89.3M562.5 78.8V89.3M563.5 78.8V89.3M564.5 78.8V93.8M565.5 78.8V93.8M566.5 78.8V93.8M567.5 78.8V93.8M568.5 82.0V89.3M569.5 82.0V89.3M570.5 78.8V89.3M571.5 78.8V93.8M572.5 78.8V89.3M573.5 82.0V89.3M574.5 78.8V93.8M575.5 78.8V89.3M576.5 78.8V89.3M577.5 78.8V89.3M578.5 82.0V89.3M579.5 82.0V93.8M580.5 78.8V93.8M581.5 78.8V89.3M582.5 78.8V89.3M583.5 78.8V93.8M584.5 78.8V89.3M585.5 78.8V93.8M586.5 82.0V89.3M587.5 82.0V89.3M588.5 82.0V89.3M589.5 82.0V93.8M590.5 78.8V93.8M591.5 78.8V89.3M592.5 78.8V89.3M593.5 78.8V89.3M594.5 78.8V93.8M595.5 78.8V89.3M596.5 82.0V93.8M597.5 82.0V93.8M598.5 82.0V89.3M599.5 78.8V89.3M600.5 78.8V93.8M601.5 78.8V93.8M602.5 78.8V93.8M603.5 78.8V89.3M604.5 78.8V93.8M605.5 78.8V93.8M606.5 78.8V93.8M607.5 78.8V89.3M608.5 78.8V89.3M609.5 78.8V89.3M610.5 78.8V89.3M611.5 78.8V89.3" stroke="#ffff00" stroke-width="1" fill="none" shape-rendering="crispEdges"/>
<path d="M98.5 279V284M130.5 279V284M162.5 279V284M194.5 279V284M226.5 279V284M258.5 279V284M290.5 279V284M322.5 279V284M355.5 279V284M387.5 279V284M419.5 279V284M451.5 279V284M483.5 279V284M515.5 279V284M547.5 279V284M579.5 279V284M611.5 279V284M91 41.5H96M91 70.5H96M91 100.5H96M91 129.5H96M91 159.5H96M91 188.5H96M91 217.5H96M91 247.5H96M91 276.5H96" stroke="#000" stroke-width="1" fill="none" shape-rendering="crispEdges"/>
<text class="ax" x="97.6" y="295.7" text-anchor="middle" textLength="6.2" lengthAdjust="spacingAndGlyphs">0</text>
<text class="ax" x="129.6" y="295.7" text-anchor="middle" textLength="25.2" lengthAdjust="spacingAndGlyphs">500n</text>
<text class="ax" x="161.6" y="295.7" text-anchor="middle" textLength="12.8" lengthAdjust="spacingAndGlyphs">1u</text>
<text class="ax" x="193.6" y="295.7" text-anchor="middle" textLength="21.6" lengthAdjust="spacingAndGlyphs">1.5u</text>
<text class="ax" x="225.6" y="295.7" text-anchor="middle" textLength="12.8" lengthAdjust="spacingAndGlyphs">2u</text>
<text class="ax" x="257.6" y="295.7" text-anchor="middle" textLength="21.6" lengthAdjust="spacingAndGlyphs">2.5u</text>
<text class="ax" x="289.6" y="295.7" text-anchor="middle" textLength="12.8" lengthAdjust="spacingAndGlyphs">3u</text>
<text class="ax" x="321.6" y="295.7" text-anchor="middle" textLength="21.6" lengthAdjust="spacingAndGlyphs">3.5u</text>
<text class="ax" x="354.6" y="295.7" text-anchor="middle" textLength="12.8" lengthAdjust="spacingAndGlyphs">4u</text>
<text class="ax" x="386.6" y="295.7" text-anchor="middle" textLength="21.6" lengthAdjust="spacingAndGlyphs">4.5u</text>
<text class="ax" x="418.6" y="295.7" text-anchor="middle" textLength="12.8" lengthAdjust="spacingAndGlyphs">5u</text>
<text class="ax" x="450.6" y="295.7" text-anchor="middle" textLength="21.6" lengthAdjust="spacingAndGlyphs">5.5u</text>
<text class="ax" x="482.6" y="295.7" text-anchor="middle" textLength="12.8" lengthAdjust="spacingAndGlyphs">6u</text>
<text class="ax" x="514.6" y="295.7" text-anchor="middle" textLength="21.6" lengthAdjust="spacingAndGlyphs">6.5u</text>
<text class="ax" x="546.6" y="295.7" text-anchor="middle" textLength="12.8" lengthAdjust="spacingAndGlyphs">7u</text>
<text class="ax" x="578.6" y="295.7" text-anchor="middle" textLength="21.6" lengthAdjust="spacingAndGlyphs">7.5u</text>
<text class="ax" x="610.6" y="295.7" text-anchor="middle" textLength="12.8" lengthAdjust="spacingAndGlyphs">8u</text>
<text class="ax" x="88.8" y="45.7" text-anchor="end" textLength="22.4" lengthAdjust="spacingAndGlyphs">20m</text>
<text class="ax" x="88.8" y="74.7" text-anchor="end" textLength="22.4" lengthAdjust="spacingAndGlyphs">15m</text>
<text class="ax" x="88.8" y="104.7" text-anchor="end" textLength="22.4" lengthAdjust="spacingAndGlyphs">10m</text>
<text class="ax" x="88.8" y="133.7" text-anchor="end" textLength="16.1" lengthAdjust="spacingAndGlyphs">5m</text>
<text class="ax" x="88.8" y="163.7" text-anchor="end" textLength="6.2" lengthAdjust="spacingAndGlyphs">0</text>
<text class="ax" x="88.8" y="192.7" text-anchor="end" textLength="20.5" lengthAdjust="spacingAndGlyphs">-5m</text>
<text class="ax" x="88.8" y="221.7" text-anchor="end" textLength="26.7" lengthAdjust="spacingAndGlyphs">-10m</text>
<text class="ax" x="88.8" y="251.7" text-anchor="end" textLength="26.7" lengthAdjust="spacingAndGlyphs">-15m</text>
<text class="ax" x="88.8" y="280.7" text-anchor="end" textLength="26.7" lengthAdjust="spacingAndGlyphs">-20m</text>
<path d="M385.5 331.5L395.5 321.5L405.5 331.5" stroke="#ffff00" stroke-width="1.2" fill="none"/>
<path d="M491.5 331.5L499.5 321.5L507.5 331.5L511.5 326.5" stroke="#ff4545" stroke-width="1.2" fill="none"/>
<path d="M597.5 331.5L605.5 321.5L613.5 331.5L617.5 326.5" stroke="#1aff1a" stroke-width="1.2" fill="none"/>
<text x="308.5" y="331" textLength="52.5" lengthAdjust="spacingAndGlyphs">Gscint_US</text>
<text x="414.5" y="331" textLength="57.5" lengthAdjust="spacingAndGlyphs">DS cherenk</text>
<text x="520.5" y="331" textLength="51" lengthAdjust="spacingAndGlyphs">Drift scint</text>
<text x="25.6" y="366" textLength="169.5" lengthAdjust="spacingAndGlyphs">Offset and scale for display only.</text>
<text x="25.6" y="381" textLength="139" lengthAdjust="spacingAndGlyphs">True voltages saved to .csv</text>
<text class="b" x="255.5" y="355" textLength="41" lengthAdjust="spacingAndGlyphs">Offsets</text>
<text class="b" x="268.5" y="386.5" textLength="28.5" lengthAdjust="spacingAndGlyphs">Scale</text>
<text class="ax" x="310.5" y="363" textLength="20" lengthAdjust="spacingAndGlyphs">0.01</text>
<text class="ax" x="417.5" y="363" textLength="26.5" lengthAdjust="spacingAndGlyphs">0.001</text>
<text class="ax" x="524.5" y="363" textLength="31" lengthAdjust="spacingAndGlyphs">-0.001</text>
<text class="ax" x="311.5" y="390" textLength="14" lengthAdjust="spacingAndGlyphs">0.1</text>
<text class="ax" x="419" y="390" textLength="5.5" lengthAdjust="spacingAndGlyphs">1</text>
<text class="ax" x="525.5" y="390" textLength="14" lengthAdjust="spacingAndGlyphs">0.1</text>
</svg>
</body></html>
